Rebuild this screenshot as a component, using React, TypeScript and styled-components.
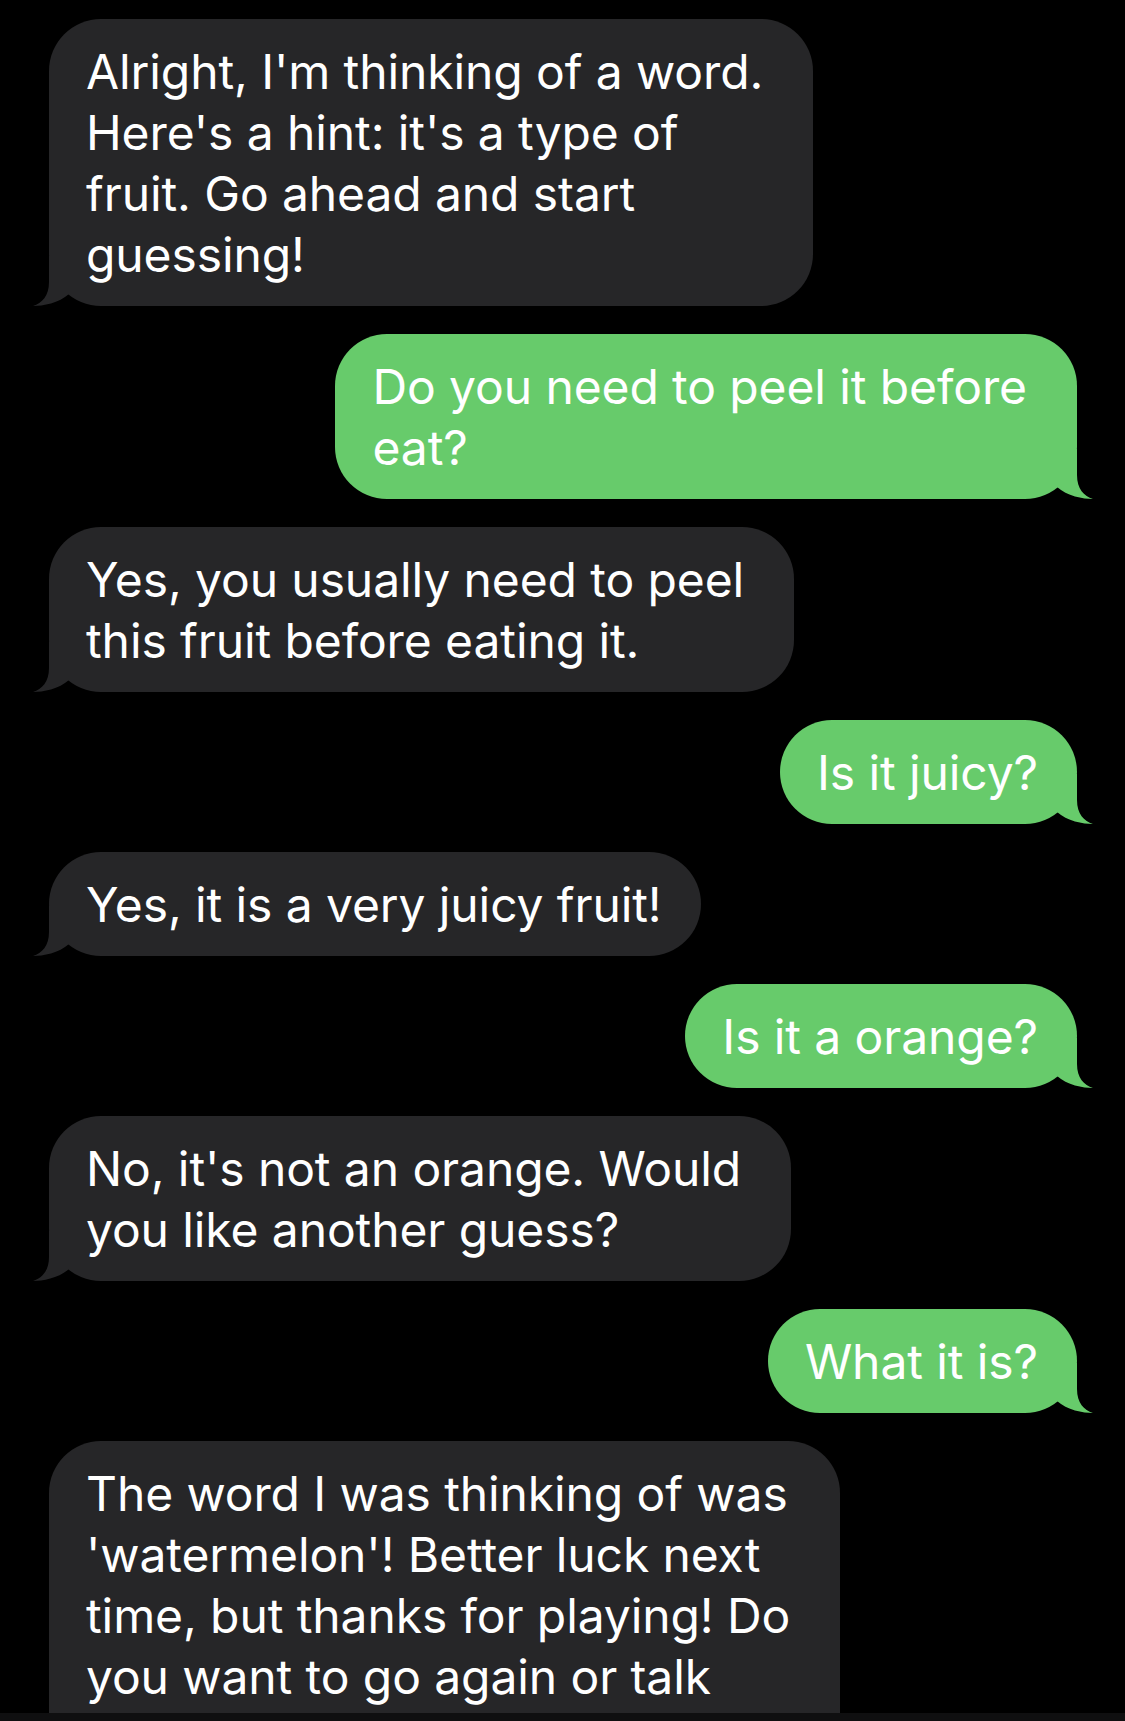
import React from "react";
import styled, { createGlobalStyle } from "styled-components";

const Global = createGlobalStyle`
  html, body { margin: 0; padding: 0; background: #000; }
  body { font-family: Inter, "Noto Sans", "Liberation Sans", sans-serif; }
`;

const Page = styled.div`
  width: 1125px;
  height: 1721px;
  background: #000;
  display: flex;
  flex-direction: column;
  overflow: hidden;
`;

const Thread = styled.div`
  flex: 1;
  min-height: 0;
  overflow: hidden;
  display: flex;
  flex-direction: column;
  gap: 28px;
  padding: 19px 48px 0 49px;
`;

const BottomBand = styled.div`
  height: 8px;
  flex: none;
  background: #0f0f10;
`;

const Row = styled.div<{ $me: boolean }>`
  display: flex;
  justify-content: ${(p) => (p.$me ? "flex-end" : "flex-start")};
  flex: none;
`;

const Bubble = styled.div<{ $me: boolean; $multi: boolean; $clipped: boolean }>`
  position: relative;
  background: ${(p) => (p.$me ? "#67cb6b" : "#262628")};
  color: #fff;
  border-radius: ${(p) => (p.$clipped ? "52px 52px 0 0" : "52px")};
  padding: 22px ${(p) => (p.$multi ? 50 : 39)}px ${(p) => (p.$clipped ? 60 : 21)}px 37px;
  font-size: 48px;
  line-height: 61px;
  letter-spacing: -0.1px;
`;

const Line = styled.span`
  display: block;
  white-space: nowrap;
  position: relative;
  z-index: 1;
`;

const TailSvg = styled.svg<{ $me: boolean }>`
  position: absolute;
  bottom: 0;
  width: 60px;
  height: 50px;
  ${(p) => (p.$me ? "right: -16px;" : "left: -16px; transform: scaleX(-1);")}
`;

const Tail = ({ me }: { me: boolean }) => (
  <TailSvg $me={me} viewBox="0 0 60 50">
    <path
      d="M44 0 L44 26 C44 40 51 47 60 50 C50 50 34 47 24 38 L0 38 L0 0 Z"
      fill={me ? "#67cb6b" : "#262628"}
    />
  </TailSvg>
);

type Msg = { me: boolean; lines: string[]; clipped?: boolean };

const messages: Msg[] = [
  {
    me: false,
    lines: [
      "Alright, I'm thinking of a word.",
      "Here's a hint: it's a type of",
      "fruit. Go ahead and start",
      "guessing!",
    ],
  },
  { me: true, lines: ["Do you need to peel it before", "eat?"] },
  {
    me: false,
    lines: ["Yes, you usually need to peel", "this fruit before eating it."],
  },
  { me: true, lines: ["Is it juicy?"] },
  { me: false, lines: ["Yes, it is a very juicy fruit!"] },
  { me: true, lines: ["Is it a orange?"] },
  { me: false, lines: ["No, it's not an orange. Would", "you like another guess?"] },
  { me: true, lines: ["What it is?"] },
  {
    me: false,
    clipped: true,
    lines: [
      "The word I was thinking of was",
      "'watermelon'! Better luck next",
      "time, but thanks for playing! Do",
      "you want to go again or talk",
    ],
  },
];

export default function App() {
  return (
    <>
      <Global />
      <Page>
        <Thread>
          {messages.map((m, i) => (
            <Row key={i} $me={m.me}>
              <Bubble $me={m.me} $multi={m.lines.length > 1} $clipped={!!m.clipped}>
                {!m.clipped && <Tail me={m.me} />}
                {m.lines.map((l, j) => (
                  <Line key={j}>{l}</Line>
                ))}
              </Bubble>
            </Row>
          ))}
        </Thread>
        <BottomBand />
      </Page>
    </>
  );
}
